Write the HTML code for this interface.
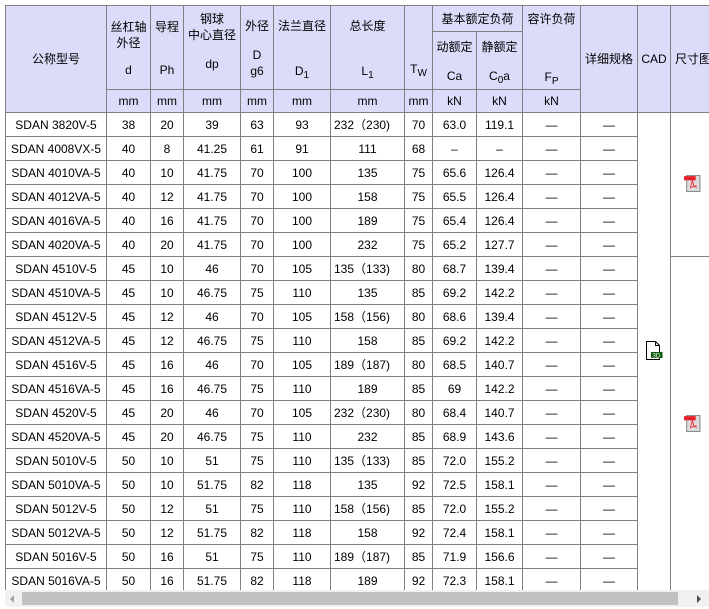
<!DOCTYPE html>
<html><head><meta charset="utf-8"><style>
*{margin:0;padding:0;box-sizing:border-box}
body{width:709px;height:609px;background:#fff;overflow:hidden;font-family:"Liberation Sans","Noto Sans CJK SC",sans-serif;font-size:12px;color:#000}
#wrap{position:absolute;left:5px;top:5px;width:704px;height:585px;overflow:hidden}
table{border-collapse:collapse;table-layout:fixed;width:709px}
td,th{border:1px solid #808080;text-align:center;vertical-align:middle;font-weight:normal;padding:0;line-height:16px;overflow:hidden;white-space:nowrap}
th{background:#dcdcfa}
th.t{vertical-align:top}
th.t div{height:16px;line-height:16px}
sub{font-size:10px;vertical-align:-3px;line-height:0}
tr.d td{height:24px}
.l{text-align:left;padding-left:3px}
.sb{position:absolute;left:5px;top:590px;width:704px;height:17px;background:#f1f1f1}
.th{position:absolute;left:17px;top:2px;width:656px;height:13px;background:#c1c1c1}
.al{position:absolute;left:5px;top:5px;width:0;height:0;border-top:4px solid transparent;border-bottom:4px solid transparent;border-right:4px solid #a3a3a3}
.ar{position:absolute;right:8px;top:5px;width:0;height:0;border-top:4px solid transparent;border-bottom:4px solid transparent;border-left:4px solid #505050}
</style></head><body>
<div id="wrap"><table>
<colgroup><col style="width:101px"><col style="width:44px"><col style="width:33px"><col style="width:57px"><col style="width:33px"><col style="width:57px"><col style="width:74px"><col style="width:28px"><col style="width:44px"><col style="width:46px"><col style="width:58px"><col style="width:57px"><col style="width:33px"><col style="width:44px"></colgroup>
<tr style="height:26px">
<th rowspan="3">公称型号</th>
<th rowspan="2" class="t" style="padding-top:13px"><div>丝杠轴</div><div>外径</div><div style="margin-top:11px">d</div></th>
<th rowspan="2" class="t" style="padding-top:13px"><div>导程</div><div style="margin-top:27px">Ph</div></th>
<th rowspan="2" class="t" style="padding-top:5px"><div>钢球</div><div>中心直径</div><div style="margin-top:13px">dp</div></th>
<th rowspan="2" class="t" style="padding-top:12px"><div>外径</div><div style="margin-top:13px">D</div><div>g6</div></th>
<th rowspan="2" class="t" style="padding-top:12px"><div>法兰直径</div><div style="margin-top:29px">D<sub>1</sub></div></th>
<th rowspan="2" class="t" style="padding-top:12px"><div>总长度</div><div style="margin-top:29px">L<sub>1</sub></div></th>
<th rowspan="2" class="t" style="padding-top:55px"><div>T<sub>W</sub></div></th>
<th colspan="2">基本额定负荷</th>
<th rowspan="2" class="t" style="padding-top:5px"><div>容许负荷</div><div style="margin-top:42px">F<sub>P</sub></div></th>
<th rowspan="3">详细规格</th>
<th rowspan="3">CAD</th>
<th rowspan="3" style="text-align:left;padding-left:4px">尺寸图</th>
</tr>
<tr style="height:58px">
<th class="t" style="padding-top:7px"><div>动额定</div><div style="margin-top:13px">Ca</div></th>
<th class="t" style="padding-top:7px"><div>静额定</div><div style="margin-top:13px">C<sub>0</sub>a</div></th>
</tr>
<tr style="height:23px"><th>mm</th><th>mm</th><th>mm</th><th>mm</th><th>mm</th><th>mm</th><th>mm</th><th>kN</th><th>kN</th><th>kN</th></tr>
<tr class="d"><td>SDAN 3820V-5</td><td>38</td><td>20</td><td>39</td><td>63</td><td>93</td><td class="l">232（230)</td><td>70</td><td>63.0</td><td>119.1</td><td>—</td><td>—</td>
<td rowspan="20"><svg width="18" height="20" viewBox="0 0 18 20"><path d="M1.5 0.5h9l4 4v14h-13z" fill="#fff" stroke="#000"/><path d="M10.5 0.5v4h4" fill="none" stroke="#000"/><rect x="6" y="11" width="11.5" height="6" fill="#0a5a0a"/><text x="7.5" y="16.5" font-size="6" fill="#fff" font-family="Liberation Sans">3D</text></svg></td>
<td rowspan="6"><svg width="17" height="18" viewBox="0 0 16 17"><rect x="2.5" y="1.5" width="12.5" height="15" fill="#ddd" stroke="#888"/><rect x="0" y="2" width="11" height="4" fill="#e8202a"/><path d="M8 6L6 13M8 6l1 5l3 2M6 13l6-2" stroke="#e8202a" fill="none" stroke-width=".8"/></svg></td></tr>
<tr class="d"><td>SDAN 4008VX-5</td><td>40</td><td>8</td><td>41.25</td><td>61</td><td>91</td><td>111</td><td>68</td><td>–</td><td>–</td><td>—</td><td>—</td></tr>
<tr class="d"><td>SDAN 4010VA-5</td><td>40</td><td>10</td><td>41.75</td><td>70</td><td>100</td><td>135</td><td>75</td><td>65.6</td><td>126.4</td><td>—</td><td>—</td></tr>
<tr class="d"><td>SDAN 4012VA-5</td><td>40</td><td>12</td><td>41.75</td><td>70</td><td>100</td><td>158</td><td>75</td><td>65.5</td><td>126.4</td><td>—</td><td>—</td></tr>
<tr class="d"><td>SDAN 4016VA-5</td><td>40</td><td>16</td><td>41.75</td><td>70</td><td>100</td><td>189</td><td>75</td><td>65.4</td><td>126.4</td><td>—</td><td>—</td></tr>
<tr class="d"><td>SDAN 4020VA-5</td><td>40</td><td>20</td><td>41.75</td><td>70</td><td>100</td><td>232</td><td>75</td><td>65.2</td><td>127.7</td><td>—</td><td>—</td></tr>
<tr class="d"><td>SDAN 4510V-5</td><td>45</td><td>10</td><td>46</td><td>70</td><td>105</td><td class="l">135（133)</td><td>80</td><td>68.7</td><td>139.4</td><td>—</td><td>—</td>
<td rowspan="14"><svg width="17" height="18" viewBox="0 0 16 17"><rect x="2.5" y="1.5" width="12.5" height="15" fill="#ddd" stroke="#888"/><rect x="0" y="2" width="11" height="4" fill="#e8202a"/><path d="M8 6L6 13M8 6l1 5l3 2M6 13l6-2" stroke="#e8202a" fill="none" stroke-width=".8"/></svg></td></tr>
<tr class="d"><td>SDAN 4510VA-5</td><td>45</td><td>10</td><td>46.75</td><td>75</td><td>110</td><td>135</td><td>85</td><td>69.2</td><td>142.2</td><td>—</td><td>—</td></tr>
<tr class="d"><td>SDAN 4512V-5</td><td>45</td><td>12</td><td>46</td><td>70</td><td>105</td><td class="l">158（156)</td><td>80</td><td>68.6</td><td>139.4</td><td>—</td><td>—</td></tr>
<tr class="d"><td>SDAN 4512VA-5</td><td>45</td><td>12</td><td>46.75</td><td>75</td><td>110</td><td>158</td><td>85</td><td>69.2</td><td>142.2</td><td>—</td><td>—</td></tr>
<tr class="d"><td>SDAN 4516V-5</td><td>45</td><td>16</td><td>46</td><td>70</td><td>105</td><td class="l">189（187)</td><td>80</td><td>68.5</td><td>140.7</td><td>—</td><td>—</td></tr>
<tr class="d"><td>SDAN 4516VA-5</td><td>45</td><td>16</td><td>46.75</td><td>75</td><td>110</td><td>189</td><td>85</td><td>69</td><td>142.2</td><td>—</td><td>—</td></tr>
<tr class="d"><td>SDAN 4520V-5</td><td>45</td><td>20</td><td>46</td><td>70</td><td>105</td><td class="l">232（230)</td><td>80</td><td>68.4</td><td>140.7</td><td>—</td><td>—</td></tr>
<tr class="d"><td>SDAN 4520VA-5</td><td>45</td><td>20</td><td>46.75</td><td>75</td><td>110</td><td>232</td><td>85</td><td>68.9</td><td>143.6</td><td>—</td><td>—</td></tr>
<tr class="d"><td>SDAN 5010V-5</td><td>50</td><td>10</td><td>51</td><td>75</td><td>110</td><td class="l">135（133)</td><td>85</td><td>72.0</td><td>155.2</td><td>—</td><td>—</td></tr>
<tr class="d"><td>SDAN 5010VA-5</td><td>50</td><td>10</td><td>51.75</td><td>82</td><td>118</td><td>135</td><td>92</td><td>72.5</td><td>158.1</td><td>—</td><td>—</td></tr>
<tr class="d"><td>SDAN 5012V-5</td><td>50</td><td>12</td><td>51</td><td>75</td><td>110</td><td class="l">158（156)</td><td>85</td><td>72.0</td><td>155.2</td><td>—</td><td>—</td></tr>
<tr class="d"><td>SDAN 5012VA-5</td><td>50</td><td>12</td><td>51.75</td><td>82</td><td>118</td><td>158</td><td>92</td><td>72.4</td><td>158.1</td><td>—</td><td>—</td></tr>
<tr class="d"><td>SDAN 5016V-5</td><td>50</td><td>16</td><td>51</td><td>75</td><td>110</td><td class="l">189（187)</td><td>85</td><td>71.9</td><td>156.6</td><td>—</td><td>—</td></tr>
<tr class="d"><td>SDAN 5016VA-5</td><td>50</td><td>16</td><td>51.75</td><td>82</td><td>118</td><td>189</td><td>92</td><td>72.3</td><td>158.1</td><td>—</td><td>—</td></tr>
</table></div>
<div class="sb"><div class="al"></div><div class="th"></div><div class="ar"></div></div>
</body></html>
